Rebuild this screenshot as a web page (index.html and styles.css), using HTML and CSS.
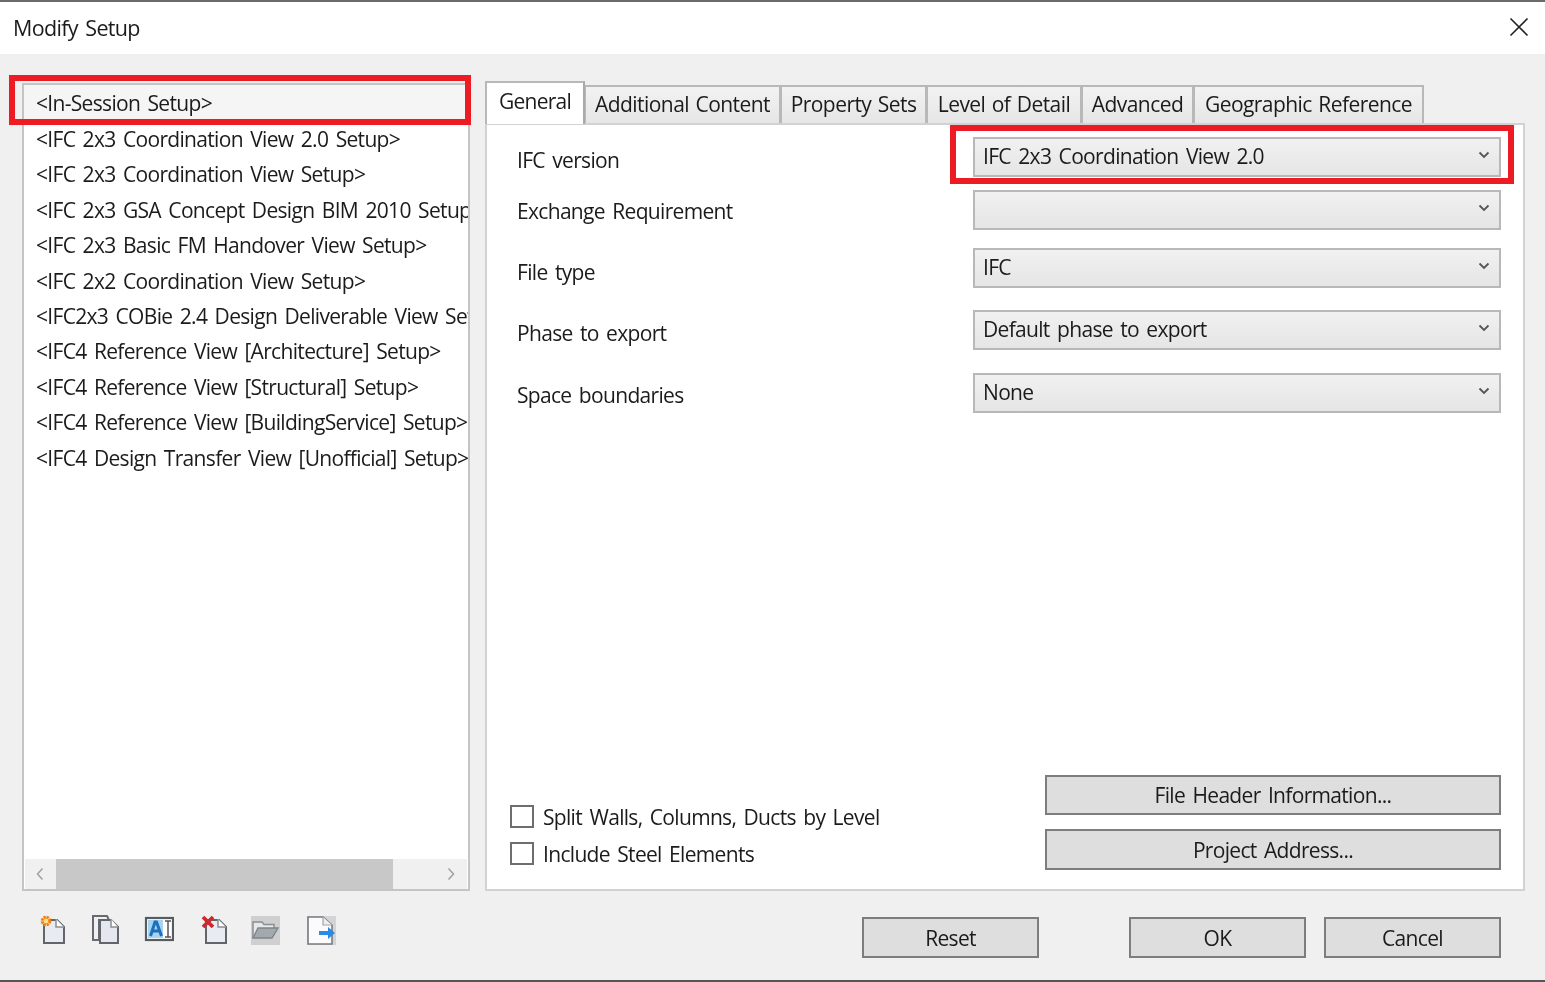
FILE: index.html
```html
<!DOCTYPE html>
<html lang="en">
<head>
<meta charset="utf-8">
<title>Modify Setup</title>
<link rel="stylesheet" href="styles.css">
</head>
<body>
<div class="dialog">
  <header class="titlebar">
    <span class="title">Modify Setup</span>
    <svg class="close" viewBox="0 0 20 20" width="20" height="20"><path d="M1.500 1.500 18.500 18.500M18.500 1.500 1.500 18.500" stroke="#222" stroke-width="1.6" fill="none"/></svg>
  </header>
  <main class="body">
    <div class="columns">
      <section class="left">
        <div class="listbox">
          <ul class="list">
            <li class="item selected">&lt;In-Session Setup&gt;</li>
            <li class="item">&lt;IFC 2x3 Coordination View 2.0 Setup&gt;</li>
            <li class="item">&lt;IFC 2x3 Coordination View Setup&gt;</li>
            <li class="item">&lt;IFC 2x3 GSA Concept Design BIM 2010 Setup&gt;</li>
            <li class="item">&lt;IFC 2x3 Basic FM Handover View Setup&gt;</li>
            <li class="item">&lt;IFC 2x2 Coordination View Setup&gt;</li>
            <li class="item">&lt;IFC2x3 COBie 2.4 Design Deliverable View Setup&gt;</li>
            <li class="item">&lt;IFC4 Reference View [Architecture] Setup&gt;</li>
            <li class="item">&lt;IFC4 Reference View [Structural] Setup&gt;</li>
            <li class="item">&lt;IFC4 Reference View [BuildingService] Setup&gt;</li>
            <li class="item">&lt;IFC4 Design Transfer View [Unofficial] Setup&gt;</li>
          </ul>
          <div class="hscroll">
            <svg class="arrow" viewBox="0 0 10 14" width="10" height="14"><path d="M7.500 1.500 2.500 7l5 5.500" stroke="#a0a0a0" stroke-width="1.5" fill="none"/></svg>
            <div class="track"><div class="thumb"></div></div>
            <svg class="arrow" viewBox="0 0 10 14" width="10" height="14"><path d="M2.500 1.500 7.500 7l-5 5.500" stroke="#a0a0a0" stroke-width="1.5" fill="none"/></svg>
          </div>
        </div>
      </section>
      <section class="right">
        <nav class="tabs">
          <span class="tab active">General</span>
          <span class="tab t2">Additional Content</span>
          <span class="tab t3">Property Sets</span>
          <span class="tab t4">Level of Detail</span>
          <span class="tab t5">Advanced</span>
          <span class="tab t6">Geographic Reference</span>
        </nav>
        <div class="panel">
          <div class="fields">
            <div class="field f1"><label class="field-label">IFC version</label><div class="select"><span>IFC 2x3 Coordination View 2.0</span><svg class="chev" viewBox="0 0 12 8" width="12" height="8"><path d="M1.500 1.500 6 6l4.500-4.500" stroke="#555" stroke-width="1.8" fill="none"/></svg></div></div>
            <div class="field f2"><label class="field-label">Exchange Requirement</label><div class="select"><span></span><svg class="chev" viewBox="0 0 12 8" width="12" height="8"><path d="M1.500 1.500 6 6l4.500-4.500" stroke="#555" stroke-width="1.8" fill="none"/></svg></div></div>
            <div class="field f3"><label class="field-label">File type</label><div class="select"><span>IFC</span><svg class="chev" viewBox="0 0 12 8" width="12" height="8"><path d="M1.500 1.500 6 6l4.500-4.500" stroke="#555" stroke-width="1.8" fill="none"/></svg></div></div>
            <div class="field f4"><label class="field-label">Phase to export</label><div class="select"><span>Default phase to export</span><svg class="chev" viewBox="0 0 12 8" width="12" height="8"><path d="M1.500 1.500 6 6l4.500-4.500" stroke="#555" stroke-width="1.8" fill="none"/></svg></div></div>
            <div class="field f5"><label class="field-label">Space boundaries</label><div class="select"><span>None</span><svg class="chev" viewBox="0 0 12 8" width="12" height="8"><path d="M1.500 1.500 6 6l4.500-4.500" stroke="#555" stroke-width="1.8" fill="none"/></svg></div></div>
          </div>
          <div class="panel-bottom">
            <div class="checks">
              <div class="check"><span class="box"></span><span class="check-text">Split Walls, Columns, Ducts by Level</span></div>
              <div class="check"><span class="box"></span><span class="check-text">Include Steel Elements</span></div>
            </div>
            <div class="panel-buttons">
              <button class="btn">File Header Information...</button>
              <button class="btn tall">Project Address...</button>
            </div>
          </div>
        </div>
      </section>
    </div>
    <footer class="footer">
      <div class="tools">
        <svg class="tool t-new" viewBox="0 0 30 30" width="30" height="30"><path d="M6 5h13l7 7v16H6z" fill="#e9ebf2" stroke="#62666b" stroke-width="2"/><path d="M18 4v8h8" fill="#fff" stroke="#8a8e93" stroke-width="1.500"/><circle cx="8" cy="6" r="3.800" fill="#fbe08a" stroke="#f07d12" stroke-width="3" stroke-dasharray="2.2 .8"/></svg>
        <svg class="tool t-copy" viewBox="0 0 30 30" width="30" height="30"><path d="M3 1h14l2 4H9v20H3z" fill="#eef0f5" stroke="#666a6f" stroke-width="2"/><path d="M10 5h11l7 7v16H10z" fill="#e4e7f0" stroke="#62666b" stroke-width="2"/><path d="M21 4v8h7" fill="#fff" stroke="#8a8e93" stroke-width="1.500"/></svg>
        <svg class="tool t-ren" viewBox="0 0 30 30" width="30" height="30"><rect x="2" y="3" width="27" height="22" fill="#fff" stroke="#565b60" stroke-width="2.200"/><rect x="4" y="5" width="15" height="18" fill="#a6d4ef"/><path d="M6.500 21 11 7h1.500L17.500 21M8.200 16h7.600" fill="none" stroke="#1f6fba" stroke-width="3"/><path d="M21 6h6M24 6v16M21 22h6" fill="none" stroke="#555" stroke-width="1.500"/></svg>
        <svg class="tool t-del" viewBox="0 0 30 30" width="30" height="30"><path d="M8 5h13l7 7v16H8z" fill="#e9ebf2" stroke="#62666b" stroke-width="2"/><path d="M20 4v8h8" fill="#fff" stroke="#8a8e93" stroke-width="1.500"/><path d="M5 2 15 12M15 2 5 12" stroke="#cc2a2a" stroke-width="3.800" fill="none"/></svg>
        <svg class="tool t-open" viewBox="0 0 29 29" width="29" height="29"><rect width="29" height="29" fill="#cfcfcf"/><path d="M2 22V6h9l2 2.500h10V12" fill="#e6e8ea" stroke="#8a8f95" stroke-width="1.500"/><path d="M2 22 7 12h20l-6 10z" fill="#a4a9ae" stroke="#7f8489" stroke-width="1.400"/></svg>
        <svg class="tool t-exp" viewBox="0 0 29 29" width="29" height="29"><rect width="29" height="29" fill="#d4d4d4"/><path d="M1 1h15l9 8v19H1z" fill="#fbfbfc" stroke="#777b80" stroke-width="1.600"/><path d="M16 1v8h9" fill="#eee" stroke="#a0a3a7" stroke-width="1.200"/><path d="M12 15h9v-4l7 6-7 6v-4h-9z" fill="#2b8ae6"/></svg>
      </div>
      <div class="actions">
        <button class="btn act reset">Reset</button>
        <button class="btn act">OK</button>
        <button class="btn act">Cancel</button>
      </div>
    </footer>
  </main>
</div>
<div class="mark mark-list"></div>
<div class="mark mark-select"></div>
</body>
</html>
```
FILE: styles.css
```css
* { box-sizing: border-box; }
html, body { margin: 0; padding: 0; }
body {
  width: 1545px;
  height: 982px;
  overflow: hidden;
  position: relative;
  font-family: "Open Sans", "Noto Sans", sans-serif;
  font-size: 21px;
  letter-spacing: -0.68px;
  word-spacing: 2.6px;
  color: #1b1b1b;
  background: #f0f0f0;
}
.dialog {
  height: 982px;
  display: flex;
  flex-direction: column;
  border-top: 2px solid #6a6a6a;
  border-bottom: 2px solid #555;
  filter: blur(0.3px);
}
.titlebar {
  height: 52px;
  flex: none;
  background: #fff;
  display: flex;
  align-items: center;
  justify-content: space-between;
  padding: 0 16px 2px 13px;
}
.title { font-size: 21.5px; }
.body {
  flex: 1;
  display: flex;
  flex-direction: column;
  padding: 26px 20px 0 22px;
  background: #f0f0f0;
}
.columns { display: flex; gap: 15px; }
.left { width: 448px; flex: none; padding-top: 3px; }
.listbox {
  height: 808px;
  border: 2px solid #c4c4c4;
  background: #fff;
  display: flex;
  flex-direction: column;
  justify-content: space-between;
}
.list { list-style: none; margin: 0; padding: 0; overflow: hidden; }
.item {
  height: 35.4px;
  line-height: 35.4px;
  padding-left: 12px;
  white-space: nowrap;
  overflow: hidden;
}
.item.selected { background: #f5f5f5; height: 37px; line-height: 37px; }
.hscroll {
  height: 30px;
  margin: 0 1px 0 1px;
  background: #f0f0f0;
  display: flex;
  align-items: center;
}
.arrow { flex: none; margin: 0 11px 0 10px; }
.track { flex: 1; height: 30px; }
.thumb { height: 30px; width: 337px; background: #c8c8c8; }
.right { width: 1040px; flex: none; }
.tabs { height: 43px; display: flex; align-items: flex-end; }
.tab {
  height: 38px;
  line-height: 35px;
  text-align: center;
  background: linear-gradient(#f2f2f2, #e6e6e6);
  border: 2px solid #b8b8b8;
  border-bottom: 0;
  margin-left: -1px;
  letter-spacing: -0.55px;
  word-spacing: 1.500px;
}
.tab.active {
  width: 100px;
  height: 43px;
  margin-left: 0;
  background: #fff;
  position: relative;
  top: 1px;
  z-index: 1;
  line-height: 36px;
  border-right-color: #aaa;
  letter-spacing: -0.72px;
}
.t2 { width: 197px; }
.t3 { width: 147px; }
.t4 { width: 156px; }
.t5 { width: 113px; }
.t6 { width: 231px; }
.panel {
  height: 768px;
  background: #fff;
  border: 2px solid #d2d2d2;
  display: flex;
  flex-direction: column;
  justify-content: space-between;
  padding: 12px 22px 19px 23px;
}
.fields { display: flex; flex-direction: column; }
.field { display: flex; justify-content: space-between; }
.f2 { margin-top: 13px; }
.f3 { margin-top: 18px; }
.f4 { margin-top: 22px; }
.f5 { margin-top: 23px; }
.field-label { padding-left: 7px; line-height: 30px; }
.f1 .field-label { padding-top: 8px; }
.f2 .field-label { padding-top: 6px; }
.f3 .field-label { padding-top: 9px; }
.f4 .field-label { padding-top: 8px; }
.f5 .field-label { padding-top: 7px; }
.select {
  width: 528px;
  height: 40px;
  border: 2px solid #b8b8b8;
  background: linear-gradient(#f1f1f1, #e5e5e5);
  display: flex;
  align-items: center;
  justify-content: space-between;
  padding: 0 9px 3px 8px;
}
.chev { margin-top: -2px; }
.panel-bottom { display: flex; justify-content: space-between; align-items: flex-end; }
.checks { display: flex; flex-direction: column; gap: 9px; padding-bottom: 3px; }
.check { display: flex; align-items: center; gap: 9px; height: 28px; }
.check-text { padding-top: 2px; }
.box { width: 24px; height: 23px; border: 2px solid #6e6e6e; background: #fff; flex: none; }
.panel-buttons { display: flex; flex-direction: column; gap: 14px; }
.btn {
  width: 456px;
  height: 40px;
  font: inherit;
  letter-spacing: inherit;
  word-spacing: inherit;
  color: inherit;
  background: #dedede;
  border: 2px solid #7d7d7d;
  padding: 0;
}
.btn.tall { height: 41px; }
.footer {
  display: flex;
  justify-content: space-between;
  align-items: flex-start;
  margin-top: 26px;
  padding-right: 24px;
}
.tools { display: flex; align-items: center; padding-left: 16px; height: 30px; margin-top: -2px; }
.tool { flex: none; }
.t-copy { margin-left: 22px; }
.t-ren { margin-left: 24px; }
.t-del { margin-left: 24px; }
.t-open { margin-left: 23px; }
.t-exp { margin-left: 27px; }
.actions { display: flex; }
.btn.act { width: 177px; height: 41px; margin-left: 18px; }
.btn.act.reset { margin-right: 72px; }
.mark {
  position: absolute;
  border: 6px solid #ed1c24;
  pointer-events: none;
}
.mark-list { left: 9px; top: 75px; width: 462px; height: 50px; }
.mark-select { left: 950px; top: 125px; width: 564px; height: 59px; }
```
